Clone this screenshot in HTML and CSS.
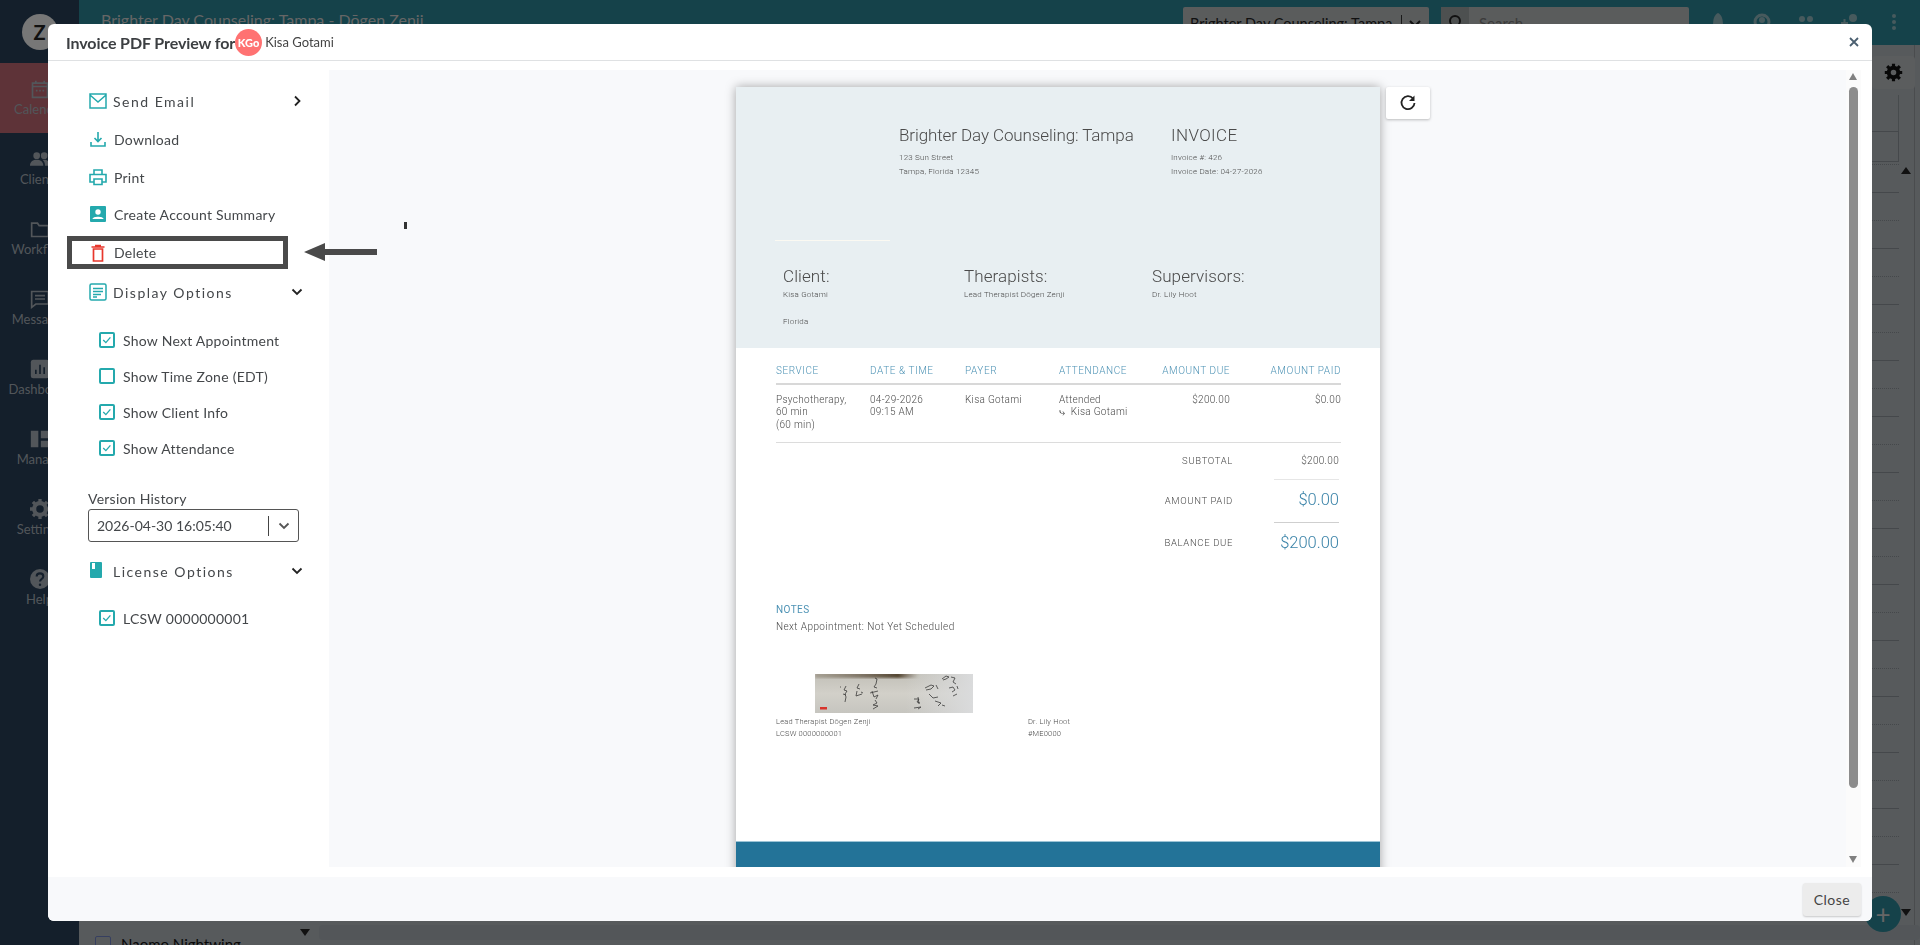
FILE: index.html
```html
<!DOCTYPE html>
<html lang="en">
<head>
    <meta charset="UTF-8">
    <title>Invoice PDF Preview</title>
    <link rel="stylesheet" href="styles.css">
</head>
<body>
    <div class="app">
        <nav class="nav">
            <div class="nav-avatar">Z</div>
            <a class="nav-item active">
                <svg viewBox="0 0 24 24"><path d="M7 2v3M17 2v3M3 5h18v17H3zM3 9h18" fill="none" stroke="currentColor" stroke-width="2"/><path d="M7 13h2v2H7zM11 13h2v2h-2zM15 13h2v2h-2z" fill="currentColor"/></svg>
                <span>Calendar</span>
            </a>
            <a class="nav-item">
                <svg viewBox="0 0 24 24"><circle cx="8" cy="8" r="4" fill="currentColor"/><circle cx="17" cy="8" r="4" fill="currentColor"/><path d="M0 20c0-5 4-7 8-7s8 2 8 7zM18 20c0-3-1-5-3-7 4-1 9 1 9 7z" fill="currentColor"/></svg>
                <span>Clients</span>
            </a>
            <a class="nav-item">
                <svg viewBox="0 0 24 24"><path d="M2 5h7l2 3h11v13H2z" fill="none" stroke="currentColor" stroke-width="2"/></svg>
                <span>Workflow</span>
            </a>
            <a class="nav-item">
                <svg viewBox="0 0 24 24"><path d="M2 3h20v15H7l-5 4z" fill="none" stroke="currentColor" stroke-width="2"/><path d="M6 8h12M6 12h12" stroke="currentColor" stroke-width="2"/></svg>
                <span>Messages</span>
            </a>
            <a class="nav-item">
                <svg viewBox="0 0 24 24"><rect x="1" y="1" width="22" height="22" rx="3" fill="currentColor"/><path d="M7 18v-5M12 18V7M17 18v-8" stroke="#283e56" stroke-width="2"/></svg>
                <span>Dashboard</span>
            </a>
            <a class="nav-item">
                <svg viewBox="0 0 24 24"><path d="M1 2h9v20H1zM13 2h10v9H13zM13 14h10v8H13z" fill="currentColor"/></svg>
                <span>Manage</span>
            </a>
            <a class="nav-item">
                <svg viewBox="0 0 24 24"><circle cx="12" cy="12" r="7" fill="none" stroke="currentColor" stroke-width="5"/><path d="M12 0v5M12 19v5M0 12h5M19 12h5M3.500 3.500l3.500 3.500M17 17l3.500 3.500M3.500 20.500l3.500-3.500M17 7l3.500-3.500" stroke="currentColor" stroke-width="4"/></svg>
                <span>Settings</span>
            </a>
            <a class="nav-item">
                <svg viewBox="0 0 24 24"><circle cx="12" cy="12" r="12" fill="currentColor"/><path d="M8 9c0-5 8-5 8 0 0 3-4 3-4 6" fill="none" stroke="#283e56" stroke-width="2.500"/><circle cx="12" cy="19" r="1.500" fill="#283e56"/></svg>
                <span>Help</span>
            </a>
        </nav>
        <div class="main">
            <header class="topbar">
                <div class="topbar-title">Brighter Day Counseling: Tampa - Dōgen Zenji</div>
                <div class="topbar-select">
                    <span>Brighter Day Counseling: Tampa</span>
                    <svg viewBox="0 0 16 16"><path d="M3 6l5 5 5-5" fill="none" stroke="currentColor" stroke-width="2"/></svg>
                </div>
                <div class="topbar-search">
                    <div class="search-icon"><svg viewBox="0 0 16 16"><circle cx="8" cy="7" r="5" fill="none" stroke="currentColor" stroke-width="2"/></svg></div>
                    <span>Search</span>
                </div>
                <div class="topbar-icons">
                    <svg viewBox="0 0 20 20"><path d="M10 1c4 2 5 6 5 14H5C5 7 6 3 10 1z" fill="currentColor"/></svg>
                    <svg viewBox="0 0 20 20"><circle cx="10" cy="10" r="7" fill="none" stroke="currentColor" stroke-width="3"/><circle cx="10" cy="8" r="3" fill="currentColor"/></svg>
                    <svg viewBox="0 0 20 20"><circle cx="6" cy="7" r="3" fill="currentColor"/><circle cx="14" cy="7" r="3" fill="currentColor"/></svg>
                    <svg viewBox="0 0 20 20"><circle cx="13" cy="6" r="4" fill="currentColor"/><path d="M1 11h7M4.500 7v8" stroke="currentColor" stroke-width="2"/></svg>
                    <svg viewBox="0 0 20 20"><circle cx="10" cy="4" r="2" fill="currentColor"/><circle cx="10" cy="10" r="2" fill="currentColor"/><circle cx="10" cy="16" r="2" fill="currentColor"/></svg>
                </div>
            </header>
            <section class="schedule">
                <div class="sched-grid">
                    <div class="head-stub"></div>
                    <div class="head-row"></div>
                    <div class="slots">
                        <div class="slot"></div><div class="slot"></div><div class="slot"></div><div class="slot"></div>
                        <div class="slot"></div><div class="slot"></div><div class="slot"></div><div class="slot"></div>
                        <div class="slot"></div><div class="slot"></div><div class="slot"></div><div class="slot"></div>
                        <div class="slot"></div><div class="slot"></div><div class="slot"></div><div class="slot"></div>
                        <div class="slot"></div><div class="slot"></div><div class="slot"></div><div class="slot"></div>
                        <div class="slot"></div><div class="slot"></div><div class="slot"></div><div class="slot"></div>
                        <div class="slot"></div><div class="slot"></div><div class="slot"></div>
                    </div>
                </div>
                <div class="gear-btn">
                    <svg viewBox="0 0 24 24"><circle cx="12" cy="12" r="6" fill="none" stroke="#111" stroke-width="5"/><path d="M12 1v5M12 18v5M1 12h5M18 12h5M4 4l4 4M16 16l4 4M4 20l4-4M16 8l4-4" stroke="#111" stroke-width="4"/></svg>
                </div>
                <div class="up-caret"></div>
                <div class="client-row">
                    <span class="client-check"></span>
                    <span>Naomo Nightwing</span>
                </div>
                <div class="client-caret"></div>
                <div class="bottom-bar"></div>
                <div class="fab">+</div>
                <div class="fab-caret"></div>
            </section>
        </div>
    </div>

    <div class="backdrop"></div>

    <div class="modal">
        <div class="modal-header">
            <h1>Invoice PDF Preview for</h1>
            <div class="badge">KGo</div>
            <div class="modal-client">Kisa Gotami</div>
            <svg class="modal-x" viewBox="0 0 12 12"><path d="M2 2l8 8M10 2l-8 8" stroke="#4b5f70" stroke-width="1.800"/></svg>
        </div>
        <div class="modal-body">
            <aside class="side">
                <div class="side-row group">
                    <svg class="icon" viewBox="0 0 18 16"><path d="M1 1h16v14H1zM1 2l8 7 8-7" fill="none" stroke="#24a9ad" stroke-width="1.500"/></svg>
                    <span>Send Email</span>
                    <svg class="chev" viewBox="0 0 12 12"><path d="M4 1.500l4.500 4.500L4 10.500" fill="none" stroke="#222" stroke-width="1.800"/></svg>
                </div>
                <div class="side-row">
                    <svg class="icon" viewBox="0 0 18 18"><path d="M9 2v9M5.500 8L9 11.500 12.500 8M2 12v4h14v-4" fill="none" stroke="#24a9ad" stroke-width="1.600"/></svg>
                    <span>Download</span>
                </div>
                <div class="side-row">
                    <svg class="icon" viewBox="0 0 18 18"><path d="M5 6V2h8v4M4.500 14H1V6.500h16V14h-3.500M5 11h8v5.500H5z" fill="none" stroke="#24a9ad" stroke-width="1.600"/></svg>
                    <span>Print</span>
                </div>
                <div class="side-row summary">
                    <svg class="icon" viewBox="0 0 18 18"><rect x="1" y="1" width="16" height="16" rx="1" fill="#24a9ad"/><circle cx="9" cy="7" r="2.700" fill="#fff"/><path d="M3.500 14c0-3 11-3 11 0z" fill="#fff"/></svg>
                    <span>Create Account Summary</span>
                </div>
                <div class="side-row delete">
                    <svg class="icon" viewBox="0 0 18 18"><path d="M4.500 5h9v12h-9zM2.500 3h13M6 1.500h6" fill="none" stroke="#e8372c" stroke-width="1.700"/></svg>
                    <span>Delete</span>
                </div>
                <div class="side-row group">
                    <svg class="icon" viewBox="0 0 18 18"><rect x="1" y="1" width="16" height="16" rx="1.500" fill="none" stroke="#24a9ad" stroke-width="1.500"/><path d="M4 5.500h10M4 8.500h10M4 11.500h8M4 14h4" stroke="#24a9ad" stroke-width="1.300"/></svg>
                    <span>Display Options</span>
                    <svg class="chev" viewBox="0 0 12 12"><path d="M1.500 3.500L6 8l4.500-4.500" fill="none" stroke="#222" stroke-width="1.800"/></svg>
                </div>
                <div class="checks">
                    <div class="check-row"><span class="box on"><svg viewBox="0 0 16 16"><path d="M3 8l3.500 3.500 6-7" fill="none" stroke="#24a9ad" stroke-width="1.800"/></svg></span>Show Next Appointment</div>
                    <div class="check-row"><span class="box"></span>Show Time Zone (EDT)</div>
                    <div class="check-row"><span class="box on"><svg viewBox="0 0 16 16"><path d="M3 8l3.500 3.500 6-7" fill="none" stroke="#24a9ad" stroke-width="1.800"/></svg></span>Show Client Info</div>
                    <div class="check-row"><span class="box on"><svg viewBox="0 0 16 16"><path d="M3 8l3.500 3.500 6-7" fill="none" stroke="#24a9ad" stroke-width="1.800"/></svg></span>Show Attendance</div>
                </div>
                <div class="version">
                    <label>Version History</label>
                    <div class="version-select">
                        <span>2026-04-30 16:05:40</span>
                        <svg viewBox="0 0 12 12"><path d="M1.500 3.500L6 8l4.500-4.500" fill="none" stroke="#555" stroke-width="1.800"/></svg>
                    </div>
                </div>
                <div class="side-row group license">
                    <svg class="icon" viewBox="0 0 18 18"><path d="M2 0h10a1 1 0 0 1 1 1v14a1 1 0 0 1-1 1H2a1 1 0 0 1-1-1V1a1 1 0 0 1 1-1z" fill="#24a9ad"/><path d="M3 1h3v6H3z" fill="#fff"/></svg>
                    <span>License Options</span>
                    <svg class="chev" viewBox="0 0 12 12"><path d="M1.500 3.500L6 8l4.500-4.500" fill="none" stroke="#222" stroke-width="1.800"/></svg>
                </div>
                <div class="checks">
                    <div class="check-row"><span class="box on"><svg viewBox="0 0 16 16"><path d="M3 8l3.500 3.500 6-7" fill="none" stroke="#24a9ad" stroke-width="1.800"/></svg></span>LCSW 0000000001</div>
                </div>
            </aside>

            <div class="preview">
                <div class="preview-pane">
                    <div class="invoice">
                        <div class="inv-head">
                            <div class="inv-top">
                                <div class="inv-company">
                                    <h2>Brighter Day Counseling: Tampa</h2>
                                    <p>123 Sun Street</p>
                                    <p>Tampa, Florida 12345</p>
                                </div>
                                <div class="inv-meta">
                                    <h2>INVOICE</h2>
                                    <p>Invoice #: 426</p>
                                    <p>Invoice Date: 04-27-2026</p>
                                </div>
                            </div>
                            <div class="inv-logo-line"></div>
                            <div class="inv-people">
                                <div class="person client">
                                    <h3>Client:</h3>
                                    <p>Kisa Gotami</p>
                                    <p class="state">Florida</p>
                                </div>
                                <div class="person therapist">
                                    <h3>Therapists:</h3>
                                    <p>Lead Therapist Dōgen Zenji</p>
                                </div>
                                <div class="person">
                                    <h3>Supervisors:</h3>
                                    <p>Dr. Lily Hoot</p>
                                </div>
                            </div>
                        </div>
                        <div class="inv-body">
                            <table class="inv-table">
                                <thead>
                                    <tr>
                                        <th class="c1">SERVICE</th>
                                        <th class="c2">DATE &amp; TIME</th>
                                        <th class="c3">PAYER</th>
                                        <th class="c4">ATTENDANCE</th>
                                        <th class="c5 num">AMOUNT DUE</th>
                                        <th class="c6 num">AMOUNT PAID</th>
                                    </tr>
                                </thead>
                                <tbody>
                                    <tr>
                                        <td>Psychotherapy,<br>60 min<br>(60 min)</td>
                                        <td>04-29-2026<br>09:15 AM</td>
                                        <td>Kisa Gotami</td>
                                        <td>Attended<br>⤷&nbsp;&nbsp;Kisa Gotami</td>
                                        <td class="num">$200.00</td>
                                        <td class="num">$0.00</td>
                                    </tr>
                                </tbody>
                            </table>
                            <div class="totals">
                                <div class="total-row sub"><span class="total-label">SUBTOTAL</span><span class="total-value">$200.00</span></div>
                                <div class="total-row paid"><span class="total-label">AMOUNT PAID</span><span class="total-value big">$0.00</span></div>
                                <div class="total-row due"><span class="total-label">BALANCE DUE</span><span class="total-value big">$200.00</span></div>
                            </div>
                            <div class="notes">
                                <h4>NOTES</h4>
                                <p>Next Appointment: Not Yet Scheduled</p>
                            </div>
                            <svg class="signature" viewBox="0 0 158 39" preserveAspectRatio="none">
                                <defs>
                                    <linearGradient id="sigbg" x1="0" y1="0" x2="0" y2="1">
                                        <stop offset="0" stop-color="#c2c0b8"/>
                                        <stop offset=".5" stop-color="#d2d0c9"/>
                                        <stop offset="1" stop-color="#c6c5bf"/>
                                    </linearGradient>
                                    <linearGradient id="sigbrown" x1="0" y1="0" x2="1" y2="0">
                                        <stop offset="0" stop-color="#8a8070" stop-opacity=".5"/>
                                        <stop offset=".8" stop-color="#4e3f2c" stop-opacity=".95"/>
                                        <stop offset="1" stop-color="#6b5d4a" stop-opacity="0"/>
                                    </linearGradient>
                                    <linearGradient id="sigright" x1="0" y1="0" x2="1" y2="0">
                                        <stop offset="0" stop-color="#dadbdc" stop-opacity="0"/>
                                        <stop offset="1" stop-color="#dadbdc"/>
                                    </linearGradient>
                                    <filter id="sigblur"><feGaussianBlur stdDeviation="1.200"/></filter>
                                </defs>
                                <rect width="158" height="39" fill="url(#sigbg)"/>
                                <rect x="90" width="68" height="39" fill="url(#sigright)"/>
                                <rect x="0" y="-2" width="104" height="6" fill="url(#sigbrown)" filter="url(#sigblur)"/>
                                <g fill="none" stroke="#222" stroke-width=".8" opacity=".85">
                                    <path d="M25 13h1M31 12l-2 4 3 1-2 3 1 3-1 5M28 20l3 1"/>
                                    <path d="M44 10l-2 4 3 1M42 17l-1 5 6-2M46 18l2 1"/>
                                    <path d="M60 4l2 1-1 5-2 3 3 1M55 19l8-2M57 17l2 6 4-2-2 4M60 26l2 3-4 2 5 1M58 35l5-3"/>
                                    <path d="M99 25h5l-2 3 3 1M103 23l1 7M99 34l7-1-3 2"/>
                                    <path d="M110 14l6-3 3 1-3 3-5 1M121 11l2 4M114 20l4 4 5-1M120 27l6 2-3 3M127 31l3 1"/>
                                    <path d="M127 5l4-3 3 1-3 2-3 1M136 3l4 1-2 4 3 2M134 14l4-1 2 3-3 2M138 22l4-2M142 12l1 3"/>
                                </g>
                                <rect x="5" y="33" width="7" height="2.500" fill="#d8342c"/>
                            </svg>
                            <div class="sign-row">
                                <div class="sign-col">
                                    <p>Lead Therapist Dōgen Zenji</p>
                                    <p>LCSW 0000000001</p>
                                </div>
                                <div class="sign-col">
                                    <p>Dr. Lily Hoot</p>
                                    <p>#ME0000</p>
                                </div>
                            </div>
                        </div>
                        <div class="inv-footer"></div>
                    </div>
                    <div class="refresh">
                        <svg viewBox="0 0 18 18"><path d="M14 4.500A6.500 6.500 0 1 0 15.500 9" fill="none" stroke="#222" stroke-width="1.800"/><path d="M15.500 1.500v5.500h-5.500z" fill="#222"/></svg>
                    </div>
                </div>
                <div class="scrollbar">
                    <div class="arrow-up"></div>
                    <div class="thumb"></div>
                    <div class="arrow-down"></div>
                </div>
            </div>
        </div>
        <div class="modal-footer">
            <button class="btn-close">Close</button>
        </div>
        <svg class="pointer" viewBox="0 0 73 20"><path d="M0 10L21 1v6h52v6H21v6z" fill="#4a4a4a"/></svg>
        <div class="tick"></div>
    </div>
</body>
</html>
```

FILE: styles.css
```css
* {
    box-sizing: border-box;
}

html, body {
    margin: 0;
    padding: 0;
    height: 945px;
    overflow: hidden;
}

body {
    font-family: "Lato", "Liberation Sans", sans-serif;
    color: #333;
}

.app {
    display: flex;
    height: 945px;
}

/* left nav, mostly hidden by the modal */
.nav {
    width: 79px;
    flex-shrink: 0;
    background-color: #283e56;
    color: #a4acb4;
}

.nav-avatar {
    width: 36px;
    height: 36px;
    margin: 14px auto 13px;
    border-radius: 50%;
    background-color: #eee;
    color: #222;
    font-size: 20px;
    font-weight: 700;
    line-height: 36px;
    text-align: center;
}

.nav-item {
    display: flex;
    flex-direction: column;
    align-items: center;
    height: 70px;
    padding-top: 16px;
    font-size: 13px;
    line-height: 16px;
}

.nav-item svg {
    width: 20px;
    height: 20px;
    margin-bottom: 2px;
}

.nav-item.active {
    background-color: #bc6670;
}

.main {
    flex: 1;
    display: flex;
    flex-direction: column;
}

.topbar {
    display: flex;
    align-items: flex-start;
    height: 45px;
    flex-shrink: 0;
    padding: 7px 0 0 22px;
    background-color: #2a8494;
    color: #ccc;
}

.topbar-title {
    width: 1082px;
    font-size: 16px;
    line-height: 26px;
}

.topbar-select {
    display: flex;
    align-items: center;
    width: 246px;
    height: 32px;
    margin-right: 12px;
    padding: 0 6px 0 7px;
    background-color: #b5b8b8;
    border-radius: 2px;
    color: #222;
    font-size: 14.500px;
}

.topbar-select span {
    flex: 1;
    padding-right: 4px;
    border-right: 1px solid #333;
    white-space: nowrap;
    overflow: hidden;
}

.topbar-select svg {
    width: 16px;
    height: 16px;
    margin-left: 5px;
}

.topbar-search {
    display: flex;
    align-items: center;
    width: 248px;
    height: 32px;
    background-color: #b5b8b8;
    border-radius: 2px;
    color: #777;
    font-size: 15px;
}

.search-icon {
    width: 28px;
    height: 32px;
    padding: 7px 6px;
    margin-right: 10px;
    background-color: #9aa0a0;
    color: #222;
}

.topbar-icons {
    display: flex;
    gap: 24px;
    padding: 5px 0 0 19px;
    color: #8fb4ba;
}

.topbar-icons svg {
    width: 20px;
    height: 20px;
}

/* calendar grid behind the modal */
.schedule {
    flex: 1;
    position: relative;
    min-height: 0;
    padding-right: 5px;
    background-color: #aeb4b9;
}

.sched-grid {
    height: 100%;
    padding-top: 50px;
    border-right: 1px solid #94999d;
    overflow: hidden;
}

.head-stub {
    height: 36px;
    margin-right: 15px;
    border-right: 1px solid #8f969b;
}

.head-row {
    height: 31px;
    margin-right: 15px;
    border-top: 1px solid #8a9196;
    border-bottom: 1px solid #8a9196;
    border-right: 1px solid #8a9196;
    margin-bottom: 2px;
}

.slots {
    margin-right: 15px;
}

.slot {
    height: 28px;
    border-top: 1px solid #8a9196;
}

.slot:nth-child(odd) {
    border-top-style: dotted;
}

.gear-btn {
    position: absolute;
    top: 11px;
    right: 5px;
    width: 43px;
    height: 33px;
    padding: 7px 12px;
    background-color: #b6babd;
    border-radius: 4px;
}

.gear-btn svg {
    display: block;
    width: 19px;
    height: 19px;
}

.up-caret {
    position: absolute;
    top: 122px;
    right: 9px;
    border-left: 5px solid transparent;
    border-right: 5px solid transparent;
    border-bottom: 7px solid #222;
}

.client-row {
    position: absolute;
    bottom: -8px;
    left: 16px;
    display: flex;
    align-items: center;
    gap: 10px;
    font-size: 15px;
    color: #111;
}

.client-check {
    width: 16px;
    height: 16px;
    border: 1px solid #6d7fc0;
    border-radius: 2px;
}

.client-caret {
    position: absolute;
    left: 221px;
    bottom: 4px;
    border: 5px solid transparent;
    border-top: 7px solid #222;
}

.bottom-bar {
    position: absolute;
    left: 240px;
    right: 0;
    bottom: 5px;
    height: 15px;
    background-color: #a6adb3;
    border-radius: 4px;
}

.fab {
    position: absolute;
    right: 19px;
    bottom: 13px;
    width: 36px;
    height: 36px;
    background-color: #2a8494;
    border-radius: 50%;
    color: #ccc;
    font-size: 26px;
    line-height: 36px;
    text-align: center;
}

.fab-caret {
    position: absolute;
    right: 9px;
    bottom: 24px;
    border: 5px solid transparent;
    border-top: 7px solid #222;
}

.backdrop {
    position: fixed;
    top: 0;
    left: 0;
    right: 0;
    bottom: 0;
    background-color: rgba(0, 0, 0, .5);
}

/* modal */
.modal {
    position: absolute;
    top: 24px;
    left: 48px;
    width: 1824px;
    height: 897px;
    display: flex;
    flex-direction: column;
    background-color: #fff;
    border-radius: 6px;
    overflow: hidden;
}

.modal-header {
    display: flex;
    align-items: center;
    height: 37px;
    flex-shrink: 0;
    padding-left: 18px;
    border-bottom: 1px solid #dfe1e3;
}

.modal-header h1 {
    margin: 0;
    font-size: 16px;
    font-weight: 700;
    letter-spacing: -.1px;
    color: #3c3f42;
}

.badge {
    width: 27px;
    height: 27px;
    border-radius: 50%;
    background-color: #ff7272;
    color: #fff;
    font-size: 11px;
    font-weight: 900;
    line-height: 27px;
    text-align: center;
}

.modal-client {
    margin-left: 3px;
    font-size: 13px;
    color: #444;
}

.modal-x {
    width: 12px;
    height: 12px;
    margin-left: auto;
    margin-right: 12px;
}

.modal-body {
    flex: 1;
    display: flex;
    min-height: 0;
}

.side {
    width: 281px;
    flex-shrink: 0;
    padding-top: 21px;
}

.side-row {
    display: flex;
    align-items: center;
    height: 38px;
    padding-left: 41px;
    font-size: 14px;
    letter-spacing: .25px;
    color: #44474a;
}

.side-row .icon {
    width: 18px;
    height: 18px;
    margin-right: 7px;
    flex-shrink: 0;
}

.side-row.group {
    letter-spacing: 1.500px;
}

.side-row.group .icon {
    margin-right: 6px;
}

.side-row .chev {
    width: 12px;
    height: 12px;
    margin-left: auto;
    margin-right: 26px;
}

.side-row.summary {
    height: 36px;
}

.side-row.delete {
    width: 221px;
    height: 33px;
    margin: 4px 0 4px 19px;
    padding-left: 17px;
    border: 5px solid #4a4a4a;
}

.checks {
    margin-top: 11px;
}

.check-row {
    display: flex;
    align-items: center;
    height: 36px;
    padding-left: 51px;
    font-size: 14px;
    letter-spacing: .25px;
    color: #44474a;
}

.box {
    width: 16px;
    height: 16px;
    margin-right: 8px;
    border: 2px solid #24a9ad;
    border-radius: 2px;
    flex-shrink: 0;
}

.box svg {
    display: block;
    width: 12px;
    height: 12px;
}

.version {
    margin: 25px 0 0 40px;
    width: 211px;
}

.version label {
    display: block;
    height: 18px;
    font-size: 14px;
    line-height: 16px;
    letter-spacing: .25px;
    color: #44474a;
}

.version-select {
    display: flex;
    align-items: center;
    height: 33px;
    padding-left: 8px;
    border: 1px solid #555;
    border-radius: 3px;
    font-size: 14px;
    color: #44474a;
}

.version-select span {
    width: 172px;
    height: 20px;
    line-height: 20px;
    border-right: 1px solid #444;
}

.version-select svg {
    width: 12px;
    height: 12px;
    margin-left: 9px;
}

.side-row.license {
    margin-top: 10px;
}

.side-row.license + .checks {
    margin-top: 10px;
}

/* preview area */
.preview {
    flex: 1;
    display: flex;
    align-items: flex-start;
    min-width: 0;
    padding: 9px 11px 10px 0;
}

.preview-pane {
    flex: 1;
    display: flex;
    justify-content: flex-start;
    align-items: flex-start;
    height: 797px;
    padding: 17px 0 0 407px;
    background-color: #f8f9fb;
    overflow: hidden;
}

.invoice {
    width: 644px;
    flex-shrink: 0;
    background-color: #fff;
    box-shadow: 0 0 10px rgba(0, 0, 0, .35);
    font-family: "Roboto", "Liberation Sans", sans-serif;
    font-weight: 300;
    color: #4a4a4a;
}

.inv-head {
    height: 261px;
    padding-top: 39px;
    background-color: #e8eff2;
}

.inv-top {
    display: flex;
    padding-left: 163px;
}

.inv-company {
    width: 272px;
}

.inv-top h2 {
    margin: 0 0 7px;
    font-size: 17px;
    font-weight: 300;
    line-height: 18px;
    letter-spacing: -.1px;
    white-space: nowrap;
}

.inv-meta h2 {
    letter-spacing: .4px;
}

.inv-top p,
.person p {
    margin: 0;
    font-size: 8px;
    font-weight: 300;
    line-height: 14px;
    letter-spacing: .2px;
}

.inv-logo-line {
    width: 115px;
    height: 1px;
    margin: 61px 0 0 39px;
    background-color: #fbf9f2;
}

.inv-people {
    display: flex;
    margin-top: 25px;
    padding-left: 47px;
}

.person.client {
    width: 181px;
}

.person.therapist {
    width: 188px;
}

.person h3 {
    margin: 0 0 1px;
    font-size: 17px;
    font-weight: 300;
    line-height: 21px;
    letter-spacing: .1px;
}

.person p.state {
    margin-top: 13px;
}

.inv-body {
    padding: 0 39px 0 40px;
}

.inv-table {
    width: 565px;
    border-collapse: collapse;
    table-layout: fixed;
    font-size: 10px;
}

.inv-table th {
    height: 36px;
    padding: 16px 0 0;
    border-bottom: 2px solid #d8d8d8;
    color: #4e93b5;
    font-weight: 300;
    line-height: 14px;
    letter-spacing: .55px;
    text-align: left;
    vertical-align: top;
}

.inv-table td {
    height: 57px;
    padding: 9px 0 11px;
    border-bottom: 1px solid #dcdcdc;
    line-height: 12.300px;
    letter-spacing: .3px;
    vertical-align: top;
    white-space: nowrap;
}

.inv-table .num,
.inv-table th.num {
    text-align: right;
}

.c1 { width: 94px; }
.c2 { width: 95px; }
.c3 { width: 94px; }
.c4 { width: 100px; }
.c5 { width: 71px; }
.c6 { width: 111px; }

.totals {
    padding-right: 2px;
}

.total-row {
    display: flex;
    justify-content: flex-end;
    align-items: stretch;
}

.total-row.sub {
    height: 37px;
}

.total-row.paid {
    height: 43px;
}

.total-row.due {
    height: 42px;
}

.total-label {
    align-self: center;
    margin: 0 41px 2px 0;
    font-size: 9.500px;
    font-weight: 300;
    letter-spacing: .65px;
}

.total-value {
    display: flex;
    align-items: center;
    justify-content: flex-end;
    width: 65px;
    font-size: 10px;
    letter-spacing: .3px;
}

.total-value.big {
    padding-bottom: 2px;
    font-size: 16.500px;
    color: #3a83a8;
    letter-spacing: 0;
}

.total-row.sub .total-value {
    border-bottom: 1px solid #e6e6e6;
}

.total-row.paid .total-value {
    border-bottom: 1px solid #cfcfcf;
}

.notes {
    margin-top: 39px;
}

.notes h4 {
    margin: 0;
    font-size: 10px;
    font-weight: 400;
    line-height: 12px;
    letter-spacing: .4px;
    color: #4e93b5;
}

.notes p {
    margin: 4px 0 0;
    font-size: 10px;
    font-weight: 300;
    line-height: 14px;
    letter-spacing: .4px;
}

.signature {
    display: block;
    width: 158px;
    height: 39px;
    margin: 40px 0 0 39px;
}

.sign-row {
    display: flex;
    margin-top: 3px;
}

.sign-col {
    width: 252px;
}

.sign-col p {
    margin: 0;
    font-size: 7.500px;
    font-weight: 300;
    line-height: 12px;
    letter-spacing: .2px;
}

.inv-footer {
    height: 40px;
    margin-top: 101px;
    background-color: #237398;
    border-top: 1px solid #9cc4d6;
}

.refresh {
    width: 44px;
    height: 32px;
    flex-shrink: 0;
    margin-left: 6px;
    padding: 7px 13px;
    background-color: #fff;
    border-radius: 2px;
    box-shadow: 0 1px 3px rgba(0, 0, 0, .25);
}

.refresh svg {
    display: block;
    width: 18px;
    height: 18px;
}

.scrollbar {
    position: relative;
    width: 15px;
    height: 797px;
    flex-shrink: 0;
    background-color: #fbfbfb;
}

.thumb {
    position: absolute;
    top: 17px;
    left: 3px;
    width: 9px;
    height: 701px;
    background-color: #8c8c8c;
    border-radius: 5px;
}

.arrow-up,
.arrow-down {
    position: absolute;
    left: 3px;
    border-left: 4.500px solid transparent;
    border-right: 4.500px solid transparent;
}

.arrow-up {
    top: 3px;
    border-bottom: 7px solid #808080;
}

.arrow-down {
    bottom: 4px;
    border-top: 7px solid #808080;
}

.modal-footer {
    display: flex;
    justify-content: flex-end;
    align-items: center;
    height: 44px;
    flex-shrink: 0;
    padding-right: 11px;
    background-color: #f8f9fb;
}

.btn-close {
    width: 58px;
    height: 33px;
    padding: 0;
    border: none;
    border-radius: 3px;
    background-color: #ececec;
    box-shadow: 0 1px 2px rgba(0, 0, 0, .2);
    font-family: "Lato", "Liberation Sans", sans-serif;
    font-size: 14px;
    letter-spacing: .5px;
    color: #444;
}

/* annotations drawn on the screenshot */
.pointer {
    position: absolute;
    top: 218px;
    left: 256px;
    width: 73px;
    height: 20px;
}

.tick {
    position: absolute;
    top: 198px;
    left: 356px;
    width: 3px;
    height: 7px;
    background-color: #333;
}
```
